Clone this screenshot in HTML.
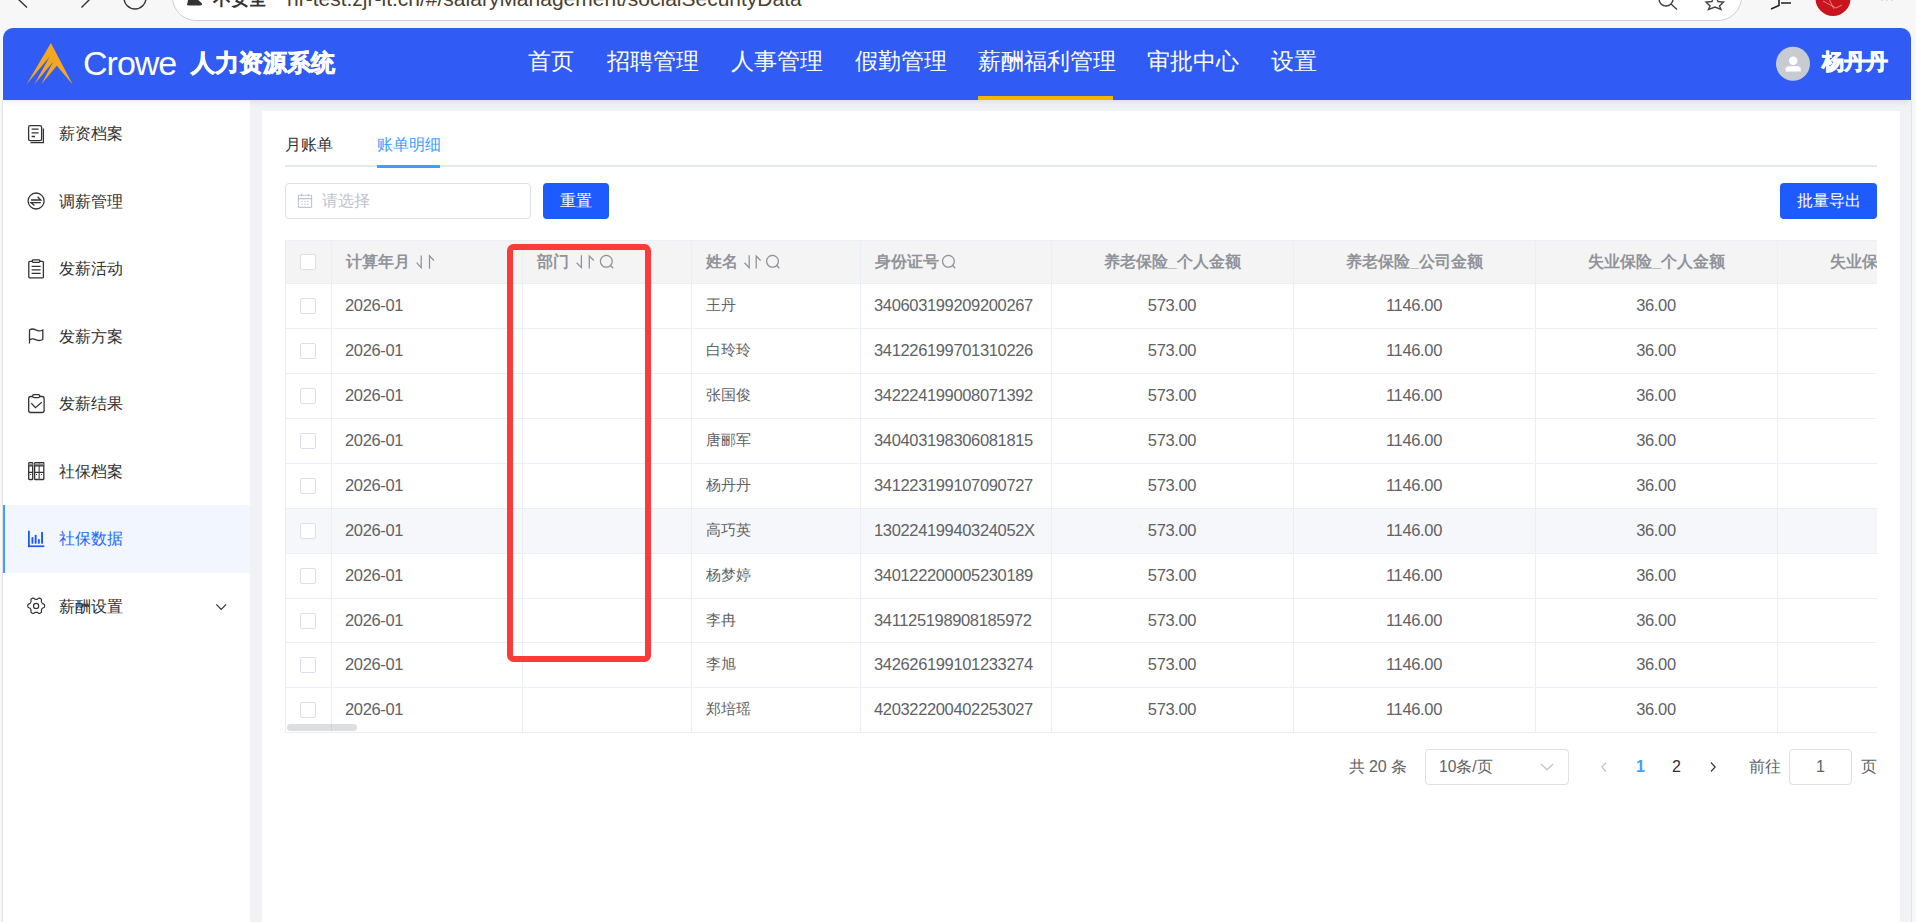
<!DOCTYPE html>
<html><head><meta charset="utf-8">
<style>
*{box-sizing:border-box;margin:0;padding:0}
html,body{width:1916px;height:922px;overflow:hidden;background:#f7f7f7;font-family:"Liberation Sans",sans-serif;position:relative}
.abs{position:absolute}
#addr{left:172px;top:-30px;width:1570px;height:51px;background:#fff;border:1px solid #cfcfcf;border-radius:24px}
#url{left:287px;top:-12.8px;font-size:21px;line-height:24px;color:#4a3f30;white-space:nowrap}
#insec{left:213px;top:-13.5px;font-size:18px;line-height:24px;color:#333;font-weight:bold;white-space:nowrap}
#app{left:3px;top:28px;width:1908px;height:894px;background:#f0f2f5;border-radius:10px 10px 0 0;overflow:hidden}
#hdr{left:0;top:0;width:1908px;height:72px;background:#305bf5;z-index:2;box-shadow:0 2px 6px rgba(0,0,0,0.08)}
.nav{top:17px;font-size:22.5px;color:#fff;white-space:nowrap;line-height:34px}
#side{left:0;top:72px;width:247px;height:822px;background:#fff}
.mi{position:absolute;left:0;width:247px;height:67.5px;font-size:16px;color:#303133}
.mi .t{position:absolute;left:56px;top:23px;line-height:22px;white-space:nowrap}
.mi svg{position:absolute;left:24px;top:24px}
.mi.act{background:#f2f7ff;color:#2166ff}
.mi.act:before{content:"";position:absolute;left:0;top:0;width:2px;height:100%;background:#409eff}
#card{left:259px;top:83px;width:1638px;height:811px;background:#fff}
.tab{position:absolute;top:22.5px;font-size:16px;line-height:22px;color:#303133;white-space:nowrap}
#table{left:23px;top:129px;width:1592px;height:493px;overflow:hidden;border-top:1px solid #ebeef5}
.thd{position:absolute;left:0;top:0;width:1700px;height:43.4px;background:#f4f4f5;border-bottom:1px solid #ebeef5}
.th{position:absolute;top:0;height:43px;line-height:41px;font-size:15.6px;font-weight:bold;color:#909399;white-space:nowrap}
.th.c{text-align:center}
.tr{position:absolute;left:0;width:1700px;height:44.88px;border-bottom:1px solid #ebeef5}
.td{position:absolute;top:-1px;height:44px;line-height:44px;font-size:16.5px;letter-spacing:-0.35px;color:#606266;white-space:nowrap}
.td.c{text-align:center}
.td.n{font-size:15.2px;letter-spacing:0}
.cb{position:absolute;top:14px;width:16px;height:16px;border:1px solid #dcdfe6;border-radius:2px;background:#fff}
.vl{position:absolute;top:0;width:1px;height:500px;background:#ebeef5}
.btn{position:absolute;background:#1d5bff;color:#fff;font-size:16px;border-radius:4px;text-align:center;line-height:35px}
.pg{position:absolute;font-size:16px;color:#606266;line-height:22px;white-space:nowrap}
</style></head><body>
<div id="addr" class="abs"></div>
<svg class="abs" style="left:0;top:0" width="240" height="28">
 <path d="M18 -1 L27 7.5" stroke="#333" stroke-width="1.4" fill="none"/>
 <path d="M81.5 7.5 L90 -1" stroke="#333" stroke-width="1.4" fill="none"/>
 <circle cx="135" cy="-2" r="11" stroke="#333" stroke-width="1.4" fill="none"/>
</svg>
<div id="insec" class="abs">不安全</div><svg class="abs" style="left:180px;top:0" width="30" height="10"><path d="M189.5,-8 L201.5,3 Q203,5.6 200,5.6 H189 Q186,5.6 187.5,3 Z" transform="translate(-180,0)" fill="#333"/></svg>
<div id="url" class="abs">hr-test.zjr-it.cn/#/salaryManagement/socialSecurityData</div>

<div class="abs" style="left:2px;top:100px;width:1px;height:822px;background:#e3e3e3"></div><div class="abs" style="left:1911px;top:100px;width:1px;height:822px;background:#e3e3e3"></div>
<div id="app" class="abs">
 <div id="hdr" class="abs">
  <svg class="abs" style="left:-3px;top:-28px" width="100" height="100"><path d="M50.9,43.1 L72.7,84.5 L56.8,65.8 L41.3,84.3 L53.2,61.7 L34.3,84.3 L49.8,56.6 L26.6,84.3 Z" fill="#f5a81e"/></svg>
  <div class="abs" style="left:80px;top:14px;font-size:34px;color:#fff;letter-spacing:-1px;line-height:42px">Crowe</div>
  <div class="abs" style="left:187.5px;top:18px;font-size:24.2px;color:#fff;font-weight:bold;line-height:34px;-webkit-text-stroke:0.7px #fff">人力资源系统</div>
  <div class="abs nav" style="left:525px">首页</div>
  <div class="abs nav" style="left:604px">招聘管理</div>
  <div class="abs nav" style="left:728px">人事管理</div>
  <div class="abs nav" style="left:852px">假勤管理</div>
  <div class="abs nav" style="left:975px">薪酬福利管理</div>
  <div class="abs nav" style="left:1144px">审批中心</div>
  <div class="abs nav" style="left:1268px">设置</div>
  <div class="abs" style="left:975px;top:68px;width:135px;height:4px;background:#f7b500"></div>
  
  <div class="abs" style="left:1818.5px;top:17px;font-size:22.3px;color:#fff;font-weight:bold;line-height:34px;-webkit-text-stroke:0.7px #fff">杨丹丹</div>
 </div>
 <div id="side" class="abs">
  <div class="mi" style="top:0"><span class="t">薪资档案</span></div>
  <div class="mi" style="top:67.5px"><span class="t">调薪管理</span></div>
  <div class="mi" style="top:135px"><span class="t">发薪活动</span></div>
  <div class="mi" style="top:202.5px"><span class="t">发薪方案</span></div>
  <div class="mi" style="top:270px"><span class="t">发薪结果</span></div>
  <div class="mi" style="top:337.5px"><span class="t">社保档案</span></div>
  <div class="mi act" style="top:405px"><span class="t">社保数据</span></div>
  <div class="mi" style="top:472.5px"><span class="t">薪酬设置</span></div>
 </div>
 <div id="card" class="abs">
  <div class="tab" style="left:23px">月账单</div>
  <div class="tab" style="left:115px;color:#409eff">账单明细</div>
  <div class="abs" style="left:23px;top:54px;width:1592px;height:2px;background:#e4e7ed"></div>
  <div class="abs" style="left:115px;top:54px;width:63px;height:3px;background:#409eff"></div>
  <div class="abs" style="left:23px;top:72px;width:246px;height:35.5px;border:1px solid #dcdfe6;border-radius:4px"></div>
  <div class="pg" style="left:60px;top:79px;color:#c0c4cc">请选择</div>
  <div class="btn" style="left:281px;top:72px;width:66px;height:35.5px">重置</div>
  <div class="btn" style="left:1518px;top:72px;width:97px;height:35.5px">批量导出</div>
  <div id="table" class="abs">
   <div class="thd"></div><div class="vl" style="left:0;z-index:3"></div>
   <div class="cb" style="left:15px;top:13px"></div>
   <div class="th" style="left:60.5px">计算年月 </div>
   <div class="th" style="left:252px">部门</div>
   <div class="th" style="left:420.5px">姓名</div>
   <div class="th" style="left:590px">身份证号</div>
   <div class="th c" style="left:766.4px;width:242px">养老保险_个人金额</div>
   <div class="th c" style="left:1008.5px;width:242px">养老保险_公司金额</div>
   <div class="th c" style="left:1250.5px;width:242px">失业保险_个人金额</div>
   <div class="th c" style="left:1492.7px;width:242px">失业保险_公司金额</div>
<div class="tr" style="top:43.40px;background:#fff">
<div class="cb" style="left:15px"></div>
<div class="td" style="left:60px">2026-01</div>
<div class="td n" style="left:421px">王丹</div>
<div class="td" style="left:589px">340603199209200267</div>
<div class="td c" style="left:766.0px;width:242.0px">573.00</div>
<div class="td c" style="left:1008.0px;width:242.0px">1146.00</div>
<div class="td c" style="left:1250.0px;width:242.0px">36.00</div>
</div>
<div class="tr" style="top:88.28px;background:#fff">
<div class="cb" style="left:15px"></div>
<div class="td" style="left:60px">2026-01</div>
<div class="td n" style="left:421px">白玲玲</div>
<div class="td" style="left:589px">341226199701310226</div>
<div class="td c" style="left:766.0px;width:242.0px">573.00</div>
<div class="td c" style="left:1008.0px;width:242.0px">1146.00</div>
<div class="td c" style="left:1250.0px;width:242.0px">36.00</div>
</div>
<div class="tr" style="top:133.16px;background:#fff">
<div class="cb" style="left:15px"></div>
<div class="td" style="left:60px">2026-01</div>
<div class="td n" style="left:421px">张国俊</div>
<div class="td" style="left:589px">342224199008071392</div>
<div class="td c" style="left:766.0px;width:242.0px">573.00</div>
<div class="td c" style="left:1008.0px;width:242.0px">1146.00</div>
<div class="td c" style="left:1250.0px;width:242.0px">36.00</div>
</div>
<div class="tr" style="top:178.04px;background:#fff">
<div class="cb" style="left:15px"></div>
<div class="td" style="left:60px">2026-01</div>
<div class="td n" style="left:421px">唐郦军</div>
<div class="td" style="left:589px">340403198306081815</div>
<div class="td c" style="left:766.0px;width:242.0px">573.00</div>
<div class="td c" style="left:1008.0px;width:242.0px">1146.00</div>
<div class="td c" style="left:1250.0px;width:242.0px">36.00</div>
</div>
<div class="tr" style="top:222.92px;background:#fff">
<div class="cb" style="left:15px"></div>
<div class="td" style="left:60px">2026-01</div>
<div class="td n" style="left:421px">杨丹丹</div>
<div class="td" style="left:589px">341223199107090727</div>
<div class="td c" style="left:766.0px;width:242.0px">573.00</div>
<div class="td c" style="left:1008.0px;width:242.0px">1146.00</div>
<div class="td c" style="left:1250.0px;width:242.0px">36.00</div>
</div>
<div class="tr" style="top:267.80px;background:#f5f7fa">
<div class="cb" style="left:15px"></div>
<div class="td" style="left:60px">2026-01</div>
<div class="td n" style="left:421px">高巧英</div>
<div class="td" style="left:589px">13022419940324052X</div>
<div class="td c" style="left:766.0px;width:242.0px">573.00</div>
<div class="td c" style="left:1008.0px;width:242.0px">1146.00</div>
<div class="td c" style="left:1250.0px;width:242.0px">36.00</div>
</div>
<div class="tr" style="top:312.68px;background:#fff">
<div class="cb" style="left:15px"></div>
<div class="td" style="left:60px">2026-01</div>
<div class="td n" style="left:421px">杨梦婷</div>
<div class="td" style="left:589px">340122200005230189</div>
<div class="td c" style="left:766.0px;width:242.0px">573.00</div>
<div class="td c" style="left:1008.0px;width:242.0px">1146.00</div>
<div class="td c" style="left:1250.0px;width:242.0px">36.00</div>
</div>
<div class="tr" style="top:357.56px;background:#fff">
<div class="cb" style="left:15px"></div>
<div class="td" style="left:60px">2026-01</div>
<div class="td n" style="left:421px">李冉</div>
<div class="td" style="left:589px">341125198908185972</div>
<div class="td c" style="left:766.0px;width:242.0px">573.00</div>
<div class="td c" style="left:1008.0px;width:242.0px">1146.00</div>
<div class="td c" style="left:1250.0px;width:242.0px">36.00</div>
</div>
<div class="tr" style="top:402.44px;background:#fff">
<div class="cb" style="left:15px"></div>
<div class="td" style="left:60px">2026-01</div>
<div class="td n" style="left:421px">李旭</div>
<div class="td" style="left:589px">342626199101233274</div>
<div class="td c" style="left:766.0px;width:242.0px">573.00</div>
<div class="td c" style="left:1008.0px;width:242.0px">1146.00</div>
<div class="td c" style="left:1250.0px;width:242.0px">36.00</div>
</div>
<div class="tr" style="top:447.32px;background:#fff">
<div class="cb" style="left:15px"></div>
<div class="td" style="left:60px">2026-01</div>
<div class="td n" style="left:421px">郑培瑶</div>
<div class="td" style="left:589px">420322200402253027</div>
<div class="td c" style="left:766.0px;width:242.0px">573.00</div>
<div class="td c" style="left:1008.0px;width:242.0px">1146.00</div>
<div class="td c" style="left:1250.0px;width:242.0px">36.00</div>
</div>
<div class="vl" style="left:46.0px"></div>
<div class="vl" style="left:237.0px"></div>
<div class="vl" style="left:406.0px"></div>
<div class="vl" style="left:575.0px"></div>
<div class="vl" style="left:766.0px"></div>
<div class="vl" style="left:1008.0px"></div>
<div class="vl" style="left:1250.0px"></div>
<div class="vl" style="left:1492.0px"></div>
   <div class="abs" style="z-index:4;left:2px;top:483px;width:70px;height:7px;border-radius:4px;background:rgba(144,147,153,0.3)"></div>
  </div>
  <div class="pg" style="left:1086.5px;top:644.5px">共 20 条</div>
  <div class="abs" style="left:1163.2px;top:638px;width:143.5px;height:35.5px;border:1px solid #dcdfe6;border-radius:4px"></div>
  <div class="pg" style="left:1177px;top:644.5px;font-size:15.6px">10条/页</div>
  <div class="pg" style="left:1374px;top:644.5px;color:#409eff;font-weight:bold">1</div>
  <div class="pg" style="left:1410px;top:644.5px;color:#303133">2</div>
  <div class="pg" style="left:1487px;top:644.5px">前往</div>
  <div class="abs" style="left:1527px;top:638px;width:62.5px;height:35.5px;border:1px solid #dcdfe6;border-radius:4px"></div>
  <div class="pg" style="left:1554px;top:644.5px">1</div>
  <div class="pg" style="left:1599px;top:644.5px">页</div>
 </div>
</div>

<svg class="abs" style="left:0;top:0;z-index:5" width="260" height="640" fill="none" stroke="#333" stroke-width="1.3">
 <rect x="28.6" y="125.6" width="13" height="15" rx="1.6"/>
 <path d="M43.4,128.5 V142.6 H30.5"/>
 <path d="M31.6,129.2 H38.6 M31.6,132.8 H38.6 M31.6,136.5 H35"/>
 <circle cx="36.1" cy="201" r="8"/>
 <path d="M31,200 H40.8 L37.6,196.8 M40.8,202.6 H31 L34.4,205.6"/>
 <rect x="28.8" y="261.3" width="14.6" height="16.6" rx="1"/>
 <rect x="32.4" y="259.8" width="7.4" height="2.6" rx="0.8" fill="#fff"/>
 <path d="M31.6,266.4 H40.6 M31.6,269.9 H40.6 M31.6,273.4 H40.6"/>
 <path d="M29.5,343.5 V330 C31,329 34,329 35.6,329.8 C37.6,331 40.2,331.4 42.8,330 V339.5 C40.2,341 37.6,340.6 35.6,339.6 C34,338.8 31,338.8 29.5,339.8"/>
 <rect x="28.7" y="396.5" width="15.4" height="16" rx="2"/>
 <rect x="32.6" y="394.6" width="7.2" height="3" rx="1.5" fill="#fff"/>
 <path d="M31.3,403.3 L35.5,407.7 L41.7,402.3"/>
 <rect x="28.7" y="462.7" width="4" height="16.8" rx="0.5"/>
 <rect x="34.6" y="462.7" width="9.2" height="16.8" rx="0.5"/>
 <path d="M39.2,463 V479.2" stroke="#707070" stroke-width="1.5"/>
 <path d="M28.7,463.6 H32.7 V465.6 H28.7 Z M34.6,463.6 H43.8 V465.6 H34.6 Z" fill="#8a8a8a" stroke="none"/>
 <path d="M28.7,465.9 H32.7 M34.6,465.9 H43.8 M28.7,472.4 H32.7 M34.6,472.4 H43.8" stroke-width="1.2"/>
 <path d="M30.2,474.5 H31.2 M36,474.5 H37 M41,474.5 H42" stroke-width="1"/>
 <path d="M44.60,605.80 L44.58,606.24 L44.50,606.67 L44.34,607.09 L43.98,607.45 L43.40,607.73 L42.80,607.95 L42.42,608.19 L42.18,608.46 L42.00,608.76 L41.83,609.05 L41.66,609.35 L41.50,609.65 L41.38,609.99 L41.36,610.45 L41.47,611.07 L41.52,611.71 L41.38,612.20 L41.11,612.56 L40.77,612.84 L40.40,613.07 L40.01,613.28 L39.60,613.43 L39.15,613.49 L38.66,613.37 L38.13,613.00 L37.64,612.59 L37.24,612.38 L36.88,612.31 L36.54,612.30 L36.20,612.30 L35.86,612.30 L35.52,612.31 L35.16,612.38 L34.76,612.59 L34.27,613.00 L33.74,613.37 L33.25,613.49 L32.80,613.43 L32.39,613.28 L32.00,613.07 L31.63,612.84 L31.29,612.56 L31.02,612.20 L30.88,611.71 L30.93,611.07 L31.04,610.45 L31.02,609.99 L30.90,609.65 L30.74,609.35 L30.57,609.05 L30.40,608.76 L30.22,608.46 L29.98,608.19 L29.60,607.95 L29.00,607.73 L28.42,607.45 L28.06,607.09 L27.90,606.67 L27.82,606.24 L27.80,605.80 L27.82,605.36 L27.90,604.93 L28.06,604.51 L28.42,604.15 L29.00,603.87 L29.60,603.65 L29.98,603.41 L30.22,603.14 L30.40,602.84 L30.57,602.55 L30.74,602.25 L30.90,601.95 L31.02,601.61 L31.04,601.15 L30.93,600.53 L30.88,599.89 L31.02,599.40 L31.29,599.04 L31.63,598.76 L32.00,598.53 L32.39,598.32 L32.80,598.17 L33.25,598.11 L33.74,598.23 L34.27,598.60 L34.76,599.01 L35.16,599.22 L35.52,599.29 L35.86,599.30 L36.20,599.30 L36.54,599.30 L36.88,599.29 L37.24,599.22 L37.64,599.01 L38.13,598.60 L38.66,598.23 L39.15,598.11 L39.60,598.17 L40.01,598.32 L40.40,598.53 L40.77,598.76 L41.11,599.04 L41.38,599.40 L41.52,599.89 L41.47,600.53 L41.36,601.15 L41.38,601.61 L41.50,601.95 L41.66,602.25 L41.83,602.55 L42.00,602.84 L42.18,603.14 L42.42,603.41 L42.80,603.65 L43.40,603.87 L43.98,604.15 L44.34,604.51 L44.50,604.93 L44.58,605.36Z" stroke-width="1.2"/>
 <circle cx="36.1" cy="605.9" r="2.6" stroke-width="1.2"/>
 <path d="M216.3,604.3 L221.2,609.3 L226.1,604.3" stroke-width="1.2"/>
 <g fill="#1c57ff" stroke="none">
  <rect x="28" y="530.8" width="1.8" height="16.3"/>
  <rect x="28" y="545.4" width="16.3" height="1.7"/>
  <rect x="31.5" y="537" width="1.9" height="6.8" rx="0.9"/>
  <rect x="34.7" y="534.7" width="1.9" height="9.1" rx="0.9"/>
  <rect x="37.9" y="539" width="1.9" height="4.8" rx="0.9"/>
  <rect x="41.1" y="531.8" width="1.9" height="12" rx="0.9"/>
 </g>
</svg>
<svg class="abs" style="left:0;top:0;z-index:5" width="1000" height="290" fill="none" stroke="#8e9197" stroke-width="1.25">
 <g stroke="#c0c4cc" stroke-width="1.1">
  <rect x="298.4" y="195.2" width="13.2" height="12.2" rx="0.8"/>
  <path d="M298.4,198.6 H311.6 M301.6,193.8 V196.6 M308.4,193.8 V196.6"/>
  <path d="M301.4,201.6 H303 M304.2,201.6 H305.8 M307,201.6 H308.6 M301.4,204.3 H303 M304.2,204.3 H305.8 M307,204.3 H308.6" stroke-width="1"/>
 </g>
 <path d="M416.6,262.6 L421.2,267.6 V255.4 M429.5,268.8 V255.8 L433.9,260.5"/>
 <path d="M576.6,262.8 L581.4,267.6 V255.2 M589.3,268.6 V256 L593.8,260.5"/>
 <circle cx="606.3" cy="261.3" r="5.9"/><path d="M610.5,265.5 L613.2,268.2"/>
 <path d="M744.5,262.8 L749.2,267.6 V255.2 M756.2,268.6 V256 L760.6,260.5"/>
 <circle cx="772.5" cy="261.3" r="5.9"/><path d="M776.7,265.5 L779.4,268.2"/>
 <circle cx="948.4" cy="261.3" r="5.9"/><path d="M952.6,265.5 L955.3,268.2"/>
</svg>
<svg class="abs" style="left:0;top:0;z-index:5" width="1916" height="922" fill="none">
 <circle cx="1793" cy="63.8" r="17" fill="#c8cbd2"/>
 <circle cx="1793.2" cy="60.7" r="4.2" fill="#fff"/>
 <path d="M1785.6,71.4 V69 C1785.6,67.2 1787,66.3 1789,66.3 H1797.4 C1799.4,66.3 1800.8,67.2 1800.8,69 V71.4 Z" fill="#fff"/>
 <path d="M1606,762.5 L1602,767 L1606,771.5" stroke="#c0c4cc" stroke-width="1.2"/>
 <path d="M1711,762.5 L1715.2,767 L1711,771.5" stroke="#303133" stroke-width="1.1"/>
 <path d="M1541,764 L1547,769.8 L1553,764" stroke="#c0c4cc" stroke-width="1.2"/>
 <circle cx="1666" cy="-1" r="7" stroke="#444" stroke-width="1.5"/><path d="M1671,4 L1677,9.5" stroke="#444" stroke-width="1.5"/>
 <path d="M1715,-6 L1718,1.5 L1723.5,2 L1719.5,6 L1721,9.5 L1715,7 L1708.5,9.5 L1710,6 L1706,2 L1712,1.5 Z" stroke="#444" stroke-width="1.4"/>
 <path d="M1771,9 L1779,5.5 V-2 M1781,3 H1791" stroke="#222" stroke-width="1.6"/>
 <circle cx="1833" cy="-1.5" r="17.5" fill="#c8141c"/>
 <path d="M1823,1 L1836,8 L1842,5 M1828,-3 L1834,9" stroke="#f2a0a0" stroke-width="0.8"/>
 <circle cx="1882" cy="-1" r="1.2" fill="#555"/><circle cx="1887" cy="-1" r="1.2" fill="#555"/><circle cx="1892" cy="-1" r="1.2" fill="#555"/>
</svg>
<div class="abs" style="z-index:9;left:507px;top:244px;width:144px;height:418.4px;border:6px solid #fb3a3a;border-radius:6.5px"></div>
</body></html>
